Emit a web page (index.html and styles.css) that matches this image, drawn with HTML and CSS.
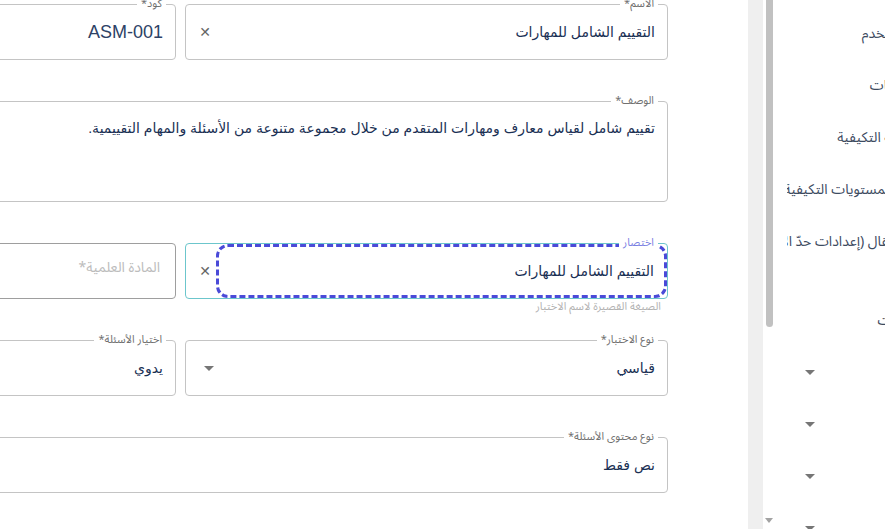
FILE: index.html
```html
<!DOCTYPE html>
<html lang="ar">
<head>
    <meta charset="UTF-8">
    <meta name="viewport" content="width=device-width, initial-scale=1.0">
    <title>تعديل الاختبار</title>
    <link rel="stylesheet" href="styles.css">
</head>
<body>
<div class="page">
    <main class="panel">
        <form class="form">
            <div class="row">
                <div class="field">
                    <span class="label">الاسم*</span>
                    <div class="value">التقييم الشامل للمهارات</div>
                    <span class="clear">&#x2715;</span>
                </div>
                <div class="field">
                    <span class="label">كود*</span>
                    <div class="value latin">ASM-001</div>
                </div>
            </div>

            <div class="row single">
                <div class="field area">
                    <span class="label">الوصف*</span>
                    <div class="value">تقييم شامل لقياس معارف ومهارات المتقدم من خلال مجموعة متنوعة من الأسئلة والمهام التقييمية.</div>
                </div>
            </div>

            <div class="row with-helper">
                <div class="cell">
                    <div class="field focused">
                        <span class="label active">اختصار</span>
                        <div class="input">
                            <div class="value">التقييم الشامل للمهارات</div>
                        </div>
                        <span class="clear">&#x2715;</span>
                    </div>
                    <p class="helper">الصيغة القصيرة لاسم الاختبار</p>
                </div>
                <div class="cell">
                    <div class="field empty">
                        <div class="placeholder">المادة العلمية*</div>
                    </div>
                </div>
            </div>

            <div class="row">
                <div class="field">
                    <span class="label">نوع الاختبار*</span>
                    <div class="value">قياسي</div>
                    <span class="caret"></span>
                </div>
                <div class="field">
                    <span class="label">اختيار الأسئلة*</span>
                    <div class="value">يدوي</div>
                </div>
            </div>

            <div class="row single">
                <div class="field">
                    <span class="label">نوع محتوى الأسئلة*</span>
                    <div class="value">نص فقط</div>
                </div>
            </div>
        </form>
    </main>

    <div class="gutter"></div>

    <div class="scrollbar">
        <div class="thumb"></div>
        <span class="arrow"></span>
    </div>

    <aside class="side">
        <div class="side-item">المستخدم</div>
        <div class="side-item mid">الدرجات</div>
        <div class="side-item">الخطة التكيفية</div>
        <div class="side-item">عدد المستويات التكيفية</div>
        <div class="side-item short">الانتقال (إعدادات حدّ الإتقان)</div>
        <div class="side-item gap">خيارات</div>
        <div class="side-item"><span class="caret"></span></div>
        <div class="side-item"><span class="caret"></span></div>
        <div class="side-item"><span class="caret"></span></div>
        <div class="side-item"><span class="caret"></span></div>
    </aside>
</div>
</body>
</html>
```

FILE: styles.css
```css
html, body {
    margin: 0;
    height: 100%;
    overflow: hidden;
    background: #fff;
}
body {
    font-family: "Noto Sans Arabic", "DejaVu Sans", sans-serif;
    color: #233a5c;
}
.page {
    display: flex;
    height: 529px;
}
.panel {
    width: 748px;
    flex: none;
    background: #fff;
}
.form {
    width: 698px;
    margin: 4px 0 0 -30px;
    direction: rtl;
}
.row {
    display: grid;
    grid-template-columns: 483px 206px;
    column-gap: 9px;
    margin-bottom: 41px;
}
.row.single {
    grid-template-columns: 1fr;
}
.row.with-helper {
    margin-bottom: 26px;
}
.field {
    position: relative;
    height: 56px;
    box-sizing: border-box;
    border: 1px solid #c4c4c4;
    border-radius: 4px;
    display: flex;
    align-items: center;
    padding: 0 12px;
}
.field.area {
    height: 101px;
    align-items: flex-start;
    padding-top: 18px;
}
.label {
    position: absolute;
    top: -8px;
    right: 9px;
    padding: 0 4px;
    background: #fff;
    font-size: 11px;
    line-height: 14px;
    color: #707070;
}
.label.active {
    color: #7a80e2;
}
.value {
    font-family: "Liberation Sans", "DejaVu Sans", sans-serif;
    font-size: 14px;
    color: #1a3054;
    white-space: nowrap;
}
.value.latin {
    font-size: 18px;
    color: #2d4266;
}
.clear {
    margin-right: auto;
    font-size: 14px;
    color: #666;
    width: 14px;
    text-align: center;
}
.caret {
    margin-right: auto;
    width: 0;
    height: 0;
    border-left: 5px solid transparent;
    border-right: 5px solid transparent;
    border-top: 5px solid #767676;
    margin-left: 6px;
}
.field.focused {
    border-color: #6cc6cc;
    padding: 0 0 0 12px;
}
.input {
    flex: 1;
    align-self: stretch;
    box-sizing: border-box;
    display: flex;
    align-items: center;
    padding-right: 10px;
    border: 3px dashed #4a4ad8;
    border-radius: 12px;
}
.field.focused .clear {
    margin-right: 4px;
}
.helper {
    margin: 1px 7px 0 0;
    font-size: 11px;
    line-height: 14px;
    color: #b3b3b3;
}
.field.empty {
    border-color: #9e9e9e;
    align-items: flex-start;
    padding-top: 9px;
}
.placeholder {
    font-size: 14px;
    color: #bcbcbc;
    margin-right: 3px;
}
.gutter {
    width: 15px;
    flex: none;
    background: #efefef;
}
.scrollbar {
    width: 12px;
    flex: none;
    display: flex;
    flex-direction: column;
    align-items: center;
    background: #fff;
}
.thumb {
    width: 7px;
    height: 327px;
    background: #c1c1c1;
    border-radius: 0 0 4px 4px;
}
.arrow {
    margin-top: auto;
    margin-bottom: 6px;
    width: 0;
    height: 0;
    border-left: 4px solid transparent;
    border-right: 4px solid transparent;
    border-top: 5px solid #a3a3a3;
}
.side {
    flex: 1;
    overflow: hidden;
    direction: rtl;
    padding-top: 7px;
    margin-left: 12px;
}
.side-item {
    height: 52px;
    display: flex;
    align-items: center;
    margin-right: -32px;
    white-space: nowrap;
    font-size: 14px;
    color: #3d4b5f;
}
.side-item.mid {
    margin-right: -30px;
}
.side-item.short {
    margin-right: -24px;
}
.side-item.gap {
    margin-top: 27px;
}
.side-item .caret {
    margin: 0 102px 0 0;
}
```
